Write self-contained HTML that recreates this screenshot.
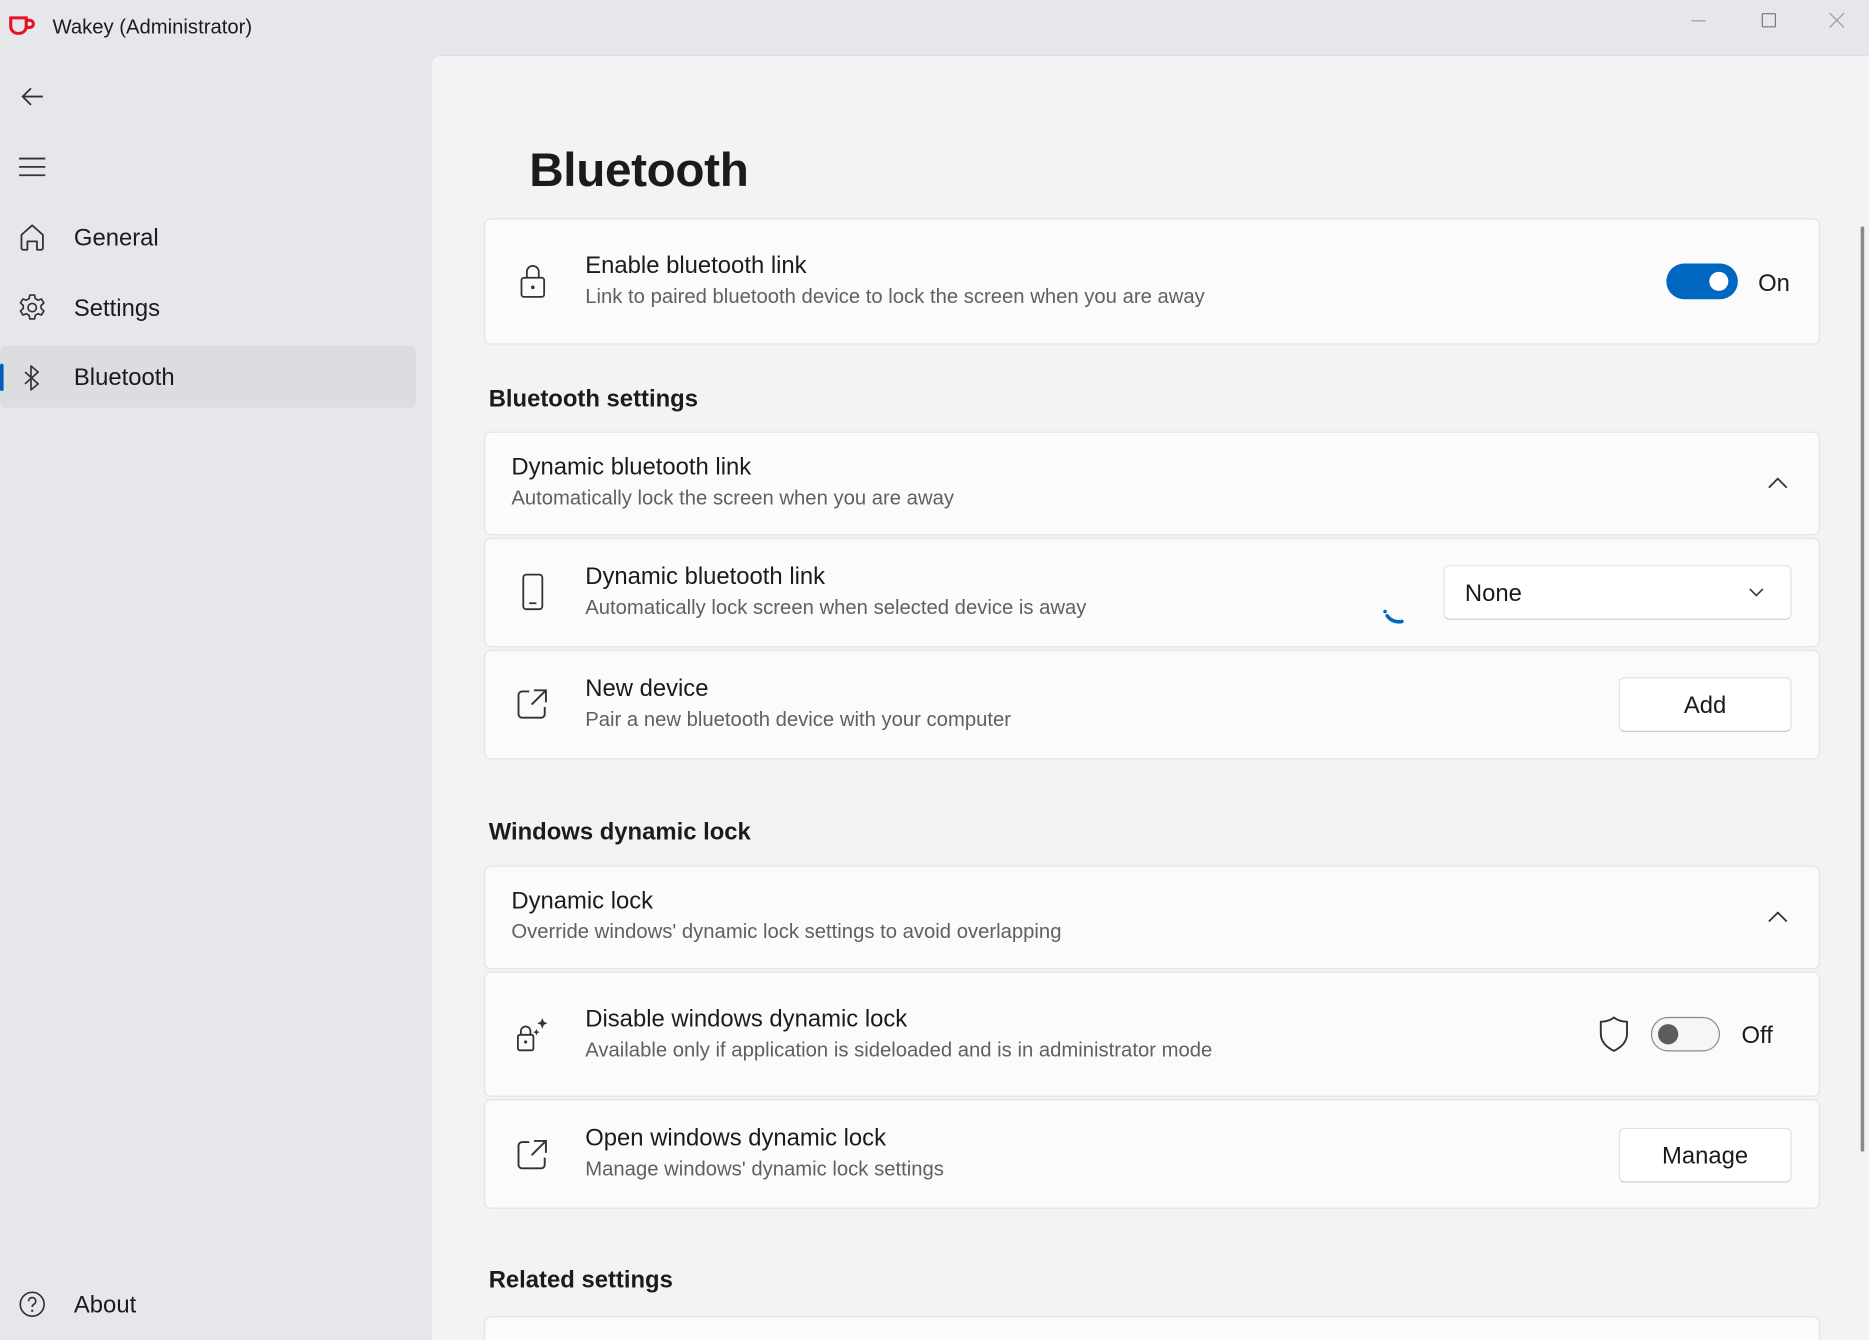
<!DOCTYPE html>
<html><head><meta charset="utf-8">
<style>
html,body{margin:0;padding:0;width:1869px;height:1340px;overflow:hidden;background:#e6e7eb;}
#w{position:absolute;left:0;top:0;width:1568px;height:1124px;overflow:hidden;transform:scale(1.19196,1.19217);transform-origin:0 0;font-family:"Liberation Sans",sans-serif;color:#1b1b1b;background:#e6e7eb;}
.a{position:absolute;}
.panel{left:361px;top:46px;width:1220px;height:1120px;background:#f3f3f5;border:1px solid #dedfe2;border-radius:8px 0 0 0;}
.card{position:absolute;left:406px;width:1121px;background:#fbfbfb;border:1px solid #e3e3e3;border-radius:6px;box-sizing:border-box;}
.t{position:absolute;font-size:20px;color:#1b1b1b;white-space:nowrap;}
.s{position:absolute;font-size:17px;color:#606060;white-space:nowrap;}
.h{position:absolute;left:410px;font-size:20px;font-weight:bold;white-space:nowrap;}
.nav{position:absolute;left:62px;font-size:20px;white-space:nowrap;}
.btn{position:absolute;background:#fff;border:1px solid #e0e0e0;border-bottom-color:#c9c9c9;border-radius:5px;box-sizing:border-box;font-size:20px;text-align:center;}
svg{position:absolute;overflow:visible}
</style></head><body><div id="w">
<svg style="left:6px;top:12px" width="26" height="20" viewBox="0 0 26 20"><path d="M3 3h13v7a6 6 0 0 1-6 6h-1a6 6 0 0 1-6-6z M16 5h3a3 3 0 0 1 0 6h-3" fill="none" stroke="#e81123" stroke-width="2.6"/></svg>
<div class="a" style="left:44px;top:13px;font-size:17px">Wakey (Administrator)</div>
<div class="a" style="left:1419px;top:17px;width:12px;height:1px;background:#999"></div>
<div class="a" style="left:1478px;top:11px;width:10px;height:10px;border:1px solid #777;border-radius:1px"></div>
<svg style="left:1535px;top:11px" width="12" height="12"><path d="M0 0L12 12M12 0L0 12" stroke="#999" stroke-width="1"/></svg>

<svg style="left:17px;top:72px" width="20" height="18"><path d="M19 9H2M9 2L2 9l7 7" fill="none" stroke="#333" stroke-width="1.5"/></svg>
<svg style="left:16px;top:132px" width="22" height="16"><path d="M0 1h22M0 8h22M0 15h22" stroke="#333" stroke-width="1.5"/></svg>
<svg style="left:16px;top:187px" width="22" height="24"><path d="M2 10L11 2l9 8v11a1.5 1.5 0 0 1-1.5 1.5H15v-7h-8v7H3.5A1.5 1.5 0 0 1 2 21z" fill="none" stroke="#333" stroke-width="1.5" stroke-linejoin="round"/></svg>
<div class="nav" style="top:189px">General</div>
<svg style="left:15px;top:246px" width="24" height="24" viewBox="0 0 24 24"><path d="M10 1.5h4l.6 3 2.3 1.3 2.9-1 2 3.4-2.3 2v2.6l2.3 2-2 3.4-2.9-1-2.3 1.3-.6 3h-4l-.6-3-2.3-1.3-2.9 1-2-3.4 2.3-2v-2.6l-2.3-2 2-3.4 2.9 1 2.3-1.3z" fill="none" stroke="#333" stroke-width="1.4" stroke-linejoin="round"/><circle cx="12" cy="12" r="3.5" fill="none" stroke="#333" stroke-width="1.4"/></svg>
<div class="nav" style="top:248px">Settings</div>
<div class="a" style="left:0;top:290px;width:349px;height:52px;background:#dcdde1;border-radius:6px"></div>
<div class="a" style="left:0;top:305px;width:3px;height:23px;background:#005fb8;border-radius:2px"></div>
<svg style="left:19px;top:305px" width="16" height="24"><path d="M2 7l11 10-6 5V2l6 5L2 17" fill="none" stroke="#333" stroke-width="1.4" stroke-linejoin="round"/></svg>
<div class="nav" style="top:306px">Bluetooth</div>
<svg style="left:15px;top:1082px" width="24" height="24"><circle cx="12" cy="12" r="10" fill="none" stroke="#333" stroke-width="1.4"/><path d="M9 9.5a3 3 0 1 1 4.5 2.5c-1 .6-1.5 1.2-1.5 2.3" fill="none" stroke="#333" stroke-width="1.4"/><circle cx="12" cy="17.5" r="1" fill="#333"/></svg>
<div class="nav" style="top:1084px">About</div>

<div class="a panel"></div>
<div class="a" style="left:1561px;top:190px;width:3px;height:776px;background:#8a8a8a;border-radius:2px"></div>
<div class="a" style="left:444px;top:121px;font-size:40px;font-weight:bold;letter-spacing:-0.3px">Bluetooth</div>

<div class="card" style="top:183px;height:106px"></div>
<svg style="left:436px;top:221px" width="22" height="30"><path d="M6 12V7a5 5 0 0 1 10 0v5" fill="none" stroke="#333" stroke-width="1.5"/><rect x="1.5" y="12" width="19" height="16" rx="2" fill="none" stroke="#333" stroke-width="1.5"/><circle cx="11" cy="20" r="1.5" fill="#333"/></svg>
<div class="t" style="left:491px;top:212px">Enable bluetooth link</div>
<div class="s" style="left:491px;top:239px">Link to paired bluetooth device to lock the screen when you are away</div>
<div class="a" style="left:1398px;top:221px;width:60px;height:30px;background:#0067c0;border-radius:15px"></div>
<div class="a" style="left:1434px;top:228px;width:16px;height:16px;background:#fff;border-radius:50%"></div>
<div class="t" style="left:1475px;top:227px">On</div>

<div class="h" style="top:324px">Bluetooth settings</div>
<div class="card" style="top:362px;height:87px"></div>
<div class="t" style="left:429px;top:381px">Dynamic bluetooth link</div>
<div class="s" style="left:429px;top:408px">Automatically lock the screen when you are away</div>
<svg style="left:1483px;top:400px" width="17" height="10"><path d="M1 9l7.5-7.5L16 9" fill="none" stroke="#333" stroke-width="1.5"/></svg>

<div class="card" style="top:451px;height:92px"></div>
<svg style="left:438px;top:481px" width="18" height="31"><rect x="1" y="1" width="16" height="29" rx="2.5" fill="none" stroke="#333" stroke-width="1.5"/><path d="M6 25h6" stroke="#333" stroke-width="1.5"/></svg>
<div class="t" style="left:491px;top:473px">Dynamic bluetooth link</div>
<div class="s" style="left:491px;top:500px">Automatically lock screen when selected device is away</div>
<svg style="left:1160px;top:505px" width="28" height="16"><path d="M2 8a12 12 0 0 0 23 0" fill="none" stroke="#0067c0" stroke-width="3" stroke-dasharray="0 4 14 60" stroke-linecap="round"/></svg>
<div class="btn" style="left:1211px;top:474px;width:292px;height:46px;text-align:left;padding:12px 0 0 17px">None</div>
<svg style="left:1467px;top:493px" width="13" height="8"><path d="M1 1l5.5 5.5L12 1" fill="none" stroke="#333" stroke-width="1.3"/></svg>

<div class="card" style="top:545px;height:92px"></div>
<svg style="left:433px;top:576px" width="28" height="28"><path d="M11 4H5a3 3 0 0 0-3 3v16a3 3 0 0 0 3 3h16a3 3 0 0 0 3-3v-6M15 3h10v10M25 3L13 15" fill="none" stroke="#333" stroke-width="1.6"/></svg>
<div class="t" style="left:491px;top:567px">New device</div>
<div class="s" style="left:491px;top:594px">Pair a new bluetooth device with your computer</div>
<div class="btn" style="left:1358px;top:568px;width:145px;height:46px;padding-top:12px">Add</div>

<div class="h" style="top:687px">Windows dynamic lock</div>
<div class="card" style="top:726px;height:87px"></div>
<div class="t" style="left:429px;top:745px">Dynamic lock</div>
<div class="s" style="left:429px;top:772px">Override windows' dynamic lock settings to avoid overlapping</div>
<svg style="left:1483px;top:764px" width="17" height="10"><path d="M1 9l7.5-7.5L16 9" fill="none" stroke="#333" stroke-width="1.5"/></svg>

<div class="card" style="top:815px;height:105px"></div>
<svg style="left:433px;top:853px" width="28" height="30"><path d="M4 15v-3a4 4 0 0 1 8 0v3" fill="none" stroke="#333" stroke-width="1.5"/><rect x="1.5" y="15" width="13" height="13" rx="1.5" fill="none" stroke="#333" stroke-width="1.5"/><circle cx="8" cy="21" r="1.3" fill="#333"/><path d="M22 1l1.3 3 3 1.3-3 1.3L22 10l-1.3-3.4-3-1.3 3-1.3zM17 10l.8 2 2 .8-2 .8-.8 2-.8-2-2-.8 2-.8z" fill="#333"/></svg>
<div class="t" style="left:491px;top:844px">Disable windows dynamic lock</div>
<div class="s" style="left:491px;top:871px">Available only if application is sideloaded and is in administrator mode</div>
<svg style="left:1341px;top:852px" width="26" height="31"><path d="M13 1.5c3 2.5 7 3.5 11 3.5v10c0 7-5 11.5-11 14.5C7 26.5 2 22 2 15V5c4 0 8-1 11-3.5z" fill="none" stroke="#333" stroke-width="1.6" stroke-linejoin="round"/></svg>
<div class="a" style="left:1385px;top:853px;width:56px;height:27px;border:1.5px solid #8a8a8a;border-radius:15px;background:#f6f6f6"></div>
<div class="a" style="left:1391px;top:859px;width:17px;height:17px;background:#5c5c5c;border-radius:50%"></div>
<div class="t" style="left:1461px;top:858px">Off</div>

<div class="card" style="top:922px;height:92px"></div>
<svg style="left:433px;top:954px" width="28" height="28"><path d="M11 4H5a3 3 0 0 0-3 3v16a3 3 0 0 0 3 3h16a3 3 0 0 0 3-3v-6M15 3h10v10M25 3L13 15" fill="none" stroke="#333" stroke-width="1.6"/></svg>
<div class="t" style="left:491px;top:944px">Open windows dynamic lock</div>
<div class="s" style="left:491px;top:971px">Manage windows' dynamic lock settings</div>
<div class="btn" style="left:1358px;top:946px;width:145px;height:46px;padding-top:12px">Manage</div>

<div class="h" style="top:1063px">Related settings</div>
<div class="card" style="top:1104px;height:60px"></div>
</div></body></html>
